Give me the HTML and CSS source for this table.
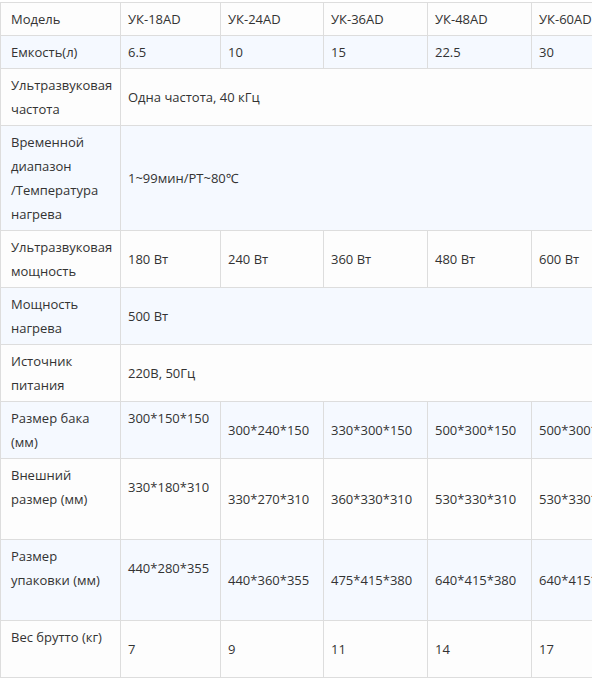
FILE: index.html
```html
<!DOCTYPE html>
<html lang="ru">
<head>
<meta charset="utf-8">
<link rel="stylesheet" href="styles.css">
</head>
<body>
<div class="wrap">
<table class="spec">
<colgroup>
<col class="c-name"><col class="c-2"><col class="c-3"><col class="c-n"><col class="c-n"><col class="c-n">
</colgroup>
<tbody>
<tr class="r-w"><td class="nm">Модель</td><td>УК-18AD</td><td>УК-24AD</td><td>УК-36AD</td><td>УК-48AD</td><td>УК-60AD</td></tr>
<tr class="r-b"><td class="nm">Емкость(л)</td><td>6.5</td><td>10</td><td>15</td><td>22.5</td><td>30</td></tr>
<tr class="r-w"><td class="nm">Ультразвуковая<br>частота</td><td colspan="5">Одна частота, 40 кГц</td></tr>
<tr class="r-b"><td class="nm">Временной<br>диапазон<br>/Температура<br>нагрева</td><td colspan="5">1~99мин/РТ~80℃</td></tr>
<tr class="r-w"><td class="nm">Ультразвуковая<br>мощность</td><td>180 Вт</td><td>240 Вт</td><td>360 Вт</td><td>480 Вт</td><td>600 Вт</td></tr>
<tr class="r-b"><td class="nm">Мощность<br>нагрева</td><td colspan="5">500 Вт</td></tr>
<tr class="r-w"><td class="nm">Источник<br>питания</td><td colspan="5">220В, 50Гц</td></tr>
<tr class="r-b"><td class="nm">Размер бака<br>(мм)</td><td>300*150*150<br>&nbsp;</td><td>300*240*150</td><td>330*300*150</td><td>500*300*150</td><td>500*300*150</td></tr>
<tr class="r-w tall"><td class="nm">Внешний<br>размер (мм)</td><td>330*180*310<br>&nbsp;</td><td>330*270*310</td><td>360*330*310</td><td>530*330*310</td><td>530*330*310</td></tr>
<tr class="r-b tall"><td class="nm">Размер<br>упаковки (мм)</td><td>440*280*355<br>&nbsp;</td><td>440*360*355</td><td>475*415*380</td><td>640*415*380</td><td>640*415*380</td></tr>
<tr class="r-w"><td class="nm">Вес брутто (кг)<br>&nbsp;</td><td>7</td><td>9</td><td>11</td><td>14</td><td>17</td></tr>
</tbody>
</table>
</div>
</body>
</html>
```
FILE: styles.css
```css
html, body {
  margin: 0;
  padding: 0;
  background: #ffffff;
}
.wrap {
  width: 592px;
  overflow: hidden;
  padding-top: 2px;
}
.spec {
  border-collapse: collapse;
  table-layout: fixed;
  width: 635px;
  font-family: "Open Sans", "Noto Sans", sans-serif;
  font-size: 13px;
  line-height: 24px;
  color: #333333;
}
.c-name { width: 120px; }
.c-2 { width: 100px; }
.c-3 { width: 103px; }
.c-n { width: 104px; }
.spec td {
  border: 1px solid #dddddd;
  padding: 4px 6px 4px 7px;
  vertical-align: middle;
  white-space: nowrap;
  overflow: hidden;
}
.spec td.nm {
  padding-left: 10px;
  padding-right: 2px;
  vertical-align: top;
}
.r-w { background: #fdfdfd; }
.r-b { background: #f5f9ff; }
.tall { height: 81px; }
```
